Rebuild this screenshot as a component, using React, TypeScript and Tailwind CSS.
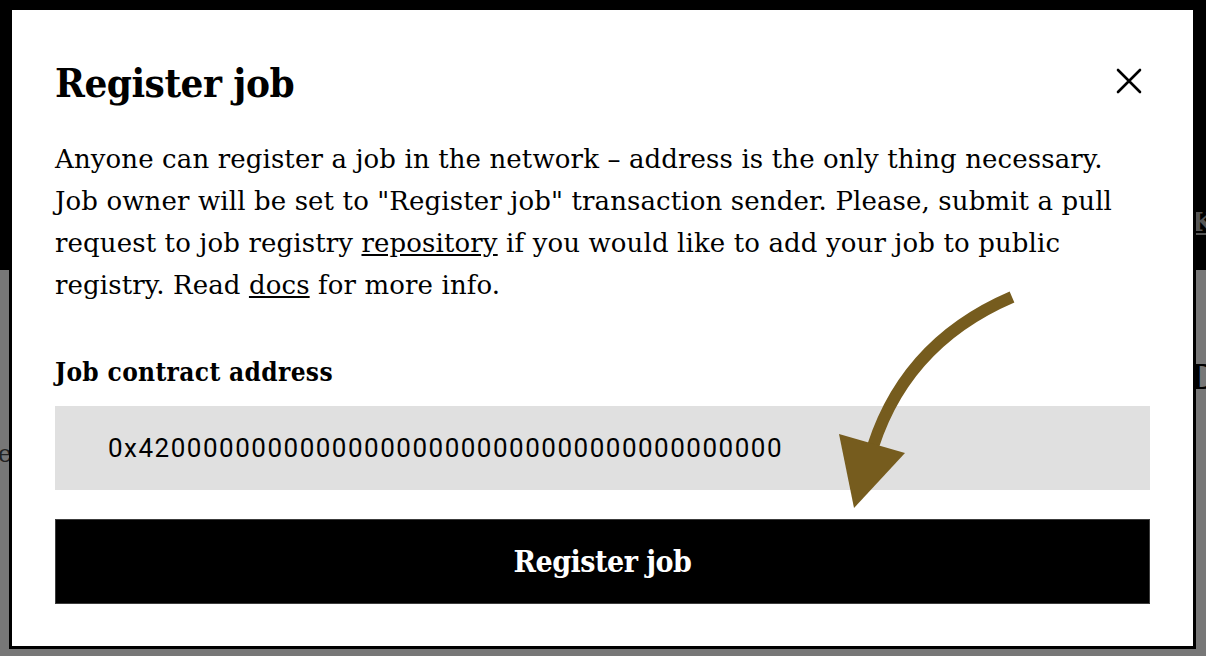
import React from "react";

const slab = { fontFamily: '"DejaVu Serif", "Liberation Serif", serif' };
const sans = { fontFamily: 'Roboto, "Liberation Sans", sans-serif' };

export default function App() {
  return (
    <div className="relative h-[656px] w-[1206px] overflow-hidden bg-[#777777]">
      {/* page behind the dimmed backdrop */}
      <div className="flex h-full flex-col">
        <div className="relative h-[270px] bg-black">
          <span
            className="absolute right-[-8px] top-[203px] text-[26px] font-bold text-[#555] underline"
            style={slab}
          >
            K
          </span>
        </div>
        <div className="relative flex-1 bg-[#777777]">
          <span className="absolute right-[-12px] top-[82px] text-[34px] font-bold text-black" style={slab}>
            D
          </span>
          <span className="absolute left-[-10px] top-[166px] text-[24px] text-[#222]" style={slab}>
            le
          </span>
        </div>
      </div>

      {/* modal */}
      <div className="absolute left-[9px] top-[7px] flex h-[642px] w-[1187px] flex-col border-[3px] border-black bg-white px-[43px] pt-[49px]">
        <div className="flex items-center justify-between">
          <h1 className="font-stretch-condensed text-[40px] font-bold leading-[48px] tracking-[-0.5px] text-black" style={slab}>
            Register job
          </h1>
          <button className="mb-[5px] mr-[6px] flex h-[30px] w-[30px] items-center justify-center">
            <svg width="26" height="26" viewBox="0 0 26 26" fill="none" stroke="black" strokeWidth="2.6" strokeLinecap="round">
              <path d="M2 2 L24 24 M24 2 L2 24" />
            </svg>
          </button>
        </div>

        <p className="mt-[31px] text-[26px] leading-[42px] tracking-[0.12px] text-black" style={slab}>
          Anyone can register a job in the network – address is the only thing necessary. Job owner will be set to
          "Register job" transaction sender. Please, submit a pull request to job registry{" "}
          <a className="underline">repository</a> if you would like to add your job to public registry. Read{" "}
          <a className="underline">docs</a> for more info.
        </p>

        <label className="font-stretch-condensed mt-[50px] text-[26px] font-bold leading-[32px] tracking-[0.35px] text-black" style={slab}>
          Job contract address
        </label>

        <div className="mt-[18px] flex h-[84px] items-center bg-[#e0e0e0] pl-[53px]">
          <span className="text-[26px] tracking-[1.5px] text-black" style={sans}>
            0x4200000000000000000000000000000000000000
          </span>
        </div>

        <button className="mt-[29px] flex h-[85px] items-center justify-center border border-[#3c3c3c] bg-black">
          <span className="font-stretch-condensed text-[30px] font-bold tracking-[-0.5px] text-white" style={slab}>
            Register job
          </span>
        </button>
      </div>

      {/* annotation arrow */}
      <svg className="pointer-events-none absolute left-0 top-0" width="1206" height="656" viewBox="0 0 1206 656">
        <path d="M1012 297 Q900 345 869 460" fill="none" stroke="#765c1e" strokeWidth="12" />
        <polygon points="839,434 905,453 854,508" fill="#765c1e" />
      </svg>
    </div>
  );
}
